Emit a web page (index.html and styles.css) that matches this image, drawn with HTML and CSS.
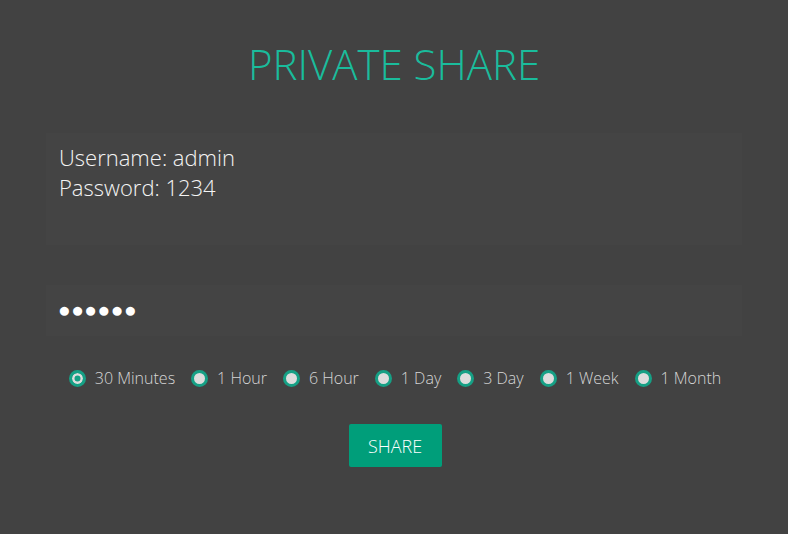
FILE: index.html
```html
<!DOCTYPE html>
<html>
<head>
<meta charset="utf-8">
<link rel="stylesheet" href="styles.css">
</head>
<body>
<div class="page">
  <h1 class="title">PRIVATE SHARE</h1>
  <div class="note">Username: admin<br>Password: 1234</div>
  <div class="pass">●●●●●●</div>
  <div class="radios">
    <label class="opt"><span class="dot on"></span>30 Minutes</label>
    <label class="opt"><span class="dot"></span>1 Hour</label>
    <label class="opt"><span class="dot"></span>6 Hour</label>
    <label class="opt"><span class="dot"></span>1 Day</label>
    <label class="opt"><span class="dot"></span>3 Day</label>
    <label class="opt"><span class="dot"></span>1 Week</label>
    <label class="opt"><span class="dot"></span>1 Month</label>
  </div>
  <div class="actions"><button class="btn">SHARE</button></div>
</div>
</body>
</html>
```
FILE: styles.css
```css
html, body {
  margin: 0;
  background: #424242;
  font-family: "Open Sans", sans-serif;
  font-weight: 300;
}
.page {
  padding: 35px 46px 0;
  display: flex;
  flex-direction: column;
}
.title {
  margin: 0;
  text-align: center;
  font-weight: 300;
  font-size: 42px;
  line-height: 58px;
  color: #1abc9c;
}
.note {
  margin-top: 40px;
  height: 112px;
  box-sizing: border-box;
  padding: 9px 13px;
  background: #444444;
  color: #f4f4f4;
  font-size: 22px;
  line-height: 30px;
}
.pass {
  margin-top: 40px;
  height: 51px;
  box-sizing: border-box;
  padding: 12px 12px;
  background: #444444;
  color: #ffffff;
  font-size: 21px;
  line-height: 27px;
  letter-spacing: 0.5px;
  font-family: "DejaVu Sans", sans-serif;
}
.radios {
  margin-top: 30px;
  display: flex;
  justify-content: center;
  gap: 16px;
  color: #d6d6d6;
  font-size: 16px;
  line-height: 24px;
  font-weight: 300;
  padding-left: 2px;
}
.opt {
  display: flex;
  align-items: center;
  gap: 9px;
}
.dot {
  width: 17px;
  height: 17px;
  box-sizing: border-box;
  border-radius: 50%;
  border: 3px solid #16a085;
  background: #dddddd;
}
.dot.on {
  background: #16a085;
  box-shadow: inset 0 0 0 2.5px #dddddd;
}
.actions {
  margin-top: 34px;
  padding-left: 2px;
  display: flex;
  justify-content: center;
}
.btn {
  width: 93px;
  height: 43px;
  border: none;
  border-radius: 2px;
  background: #009e7a;
  color: #ffffff;
  font-family: "Open Sans", sans-serif;
  font-weight: 300;
  font-size: 18px;
  padding: 0;
}
```
